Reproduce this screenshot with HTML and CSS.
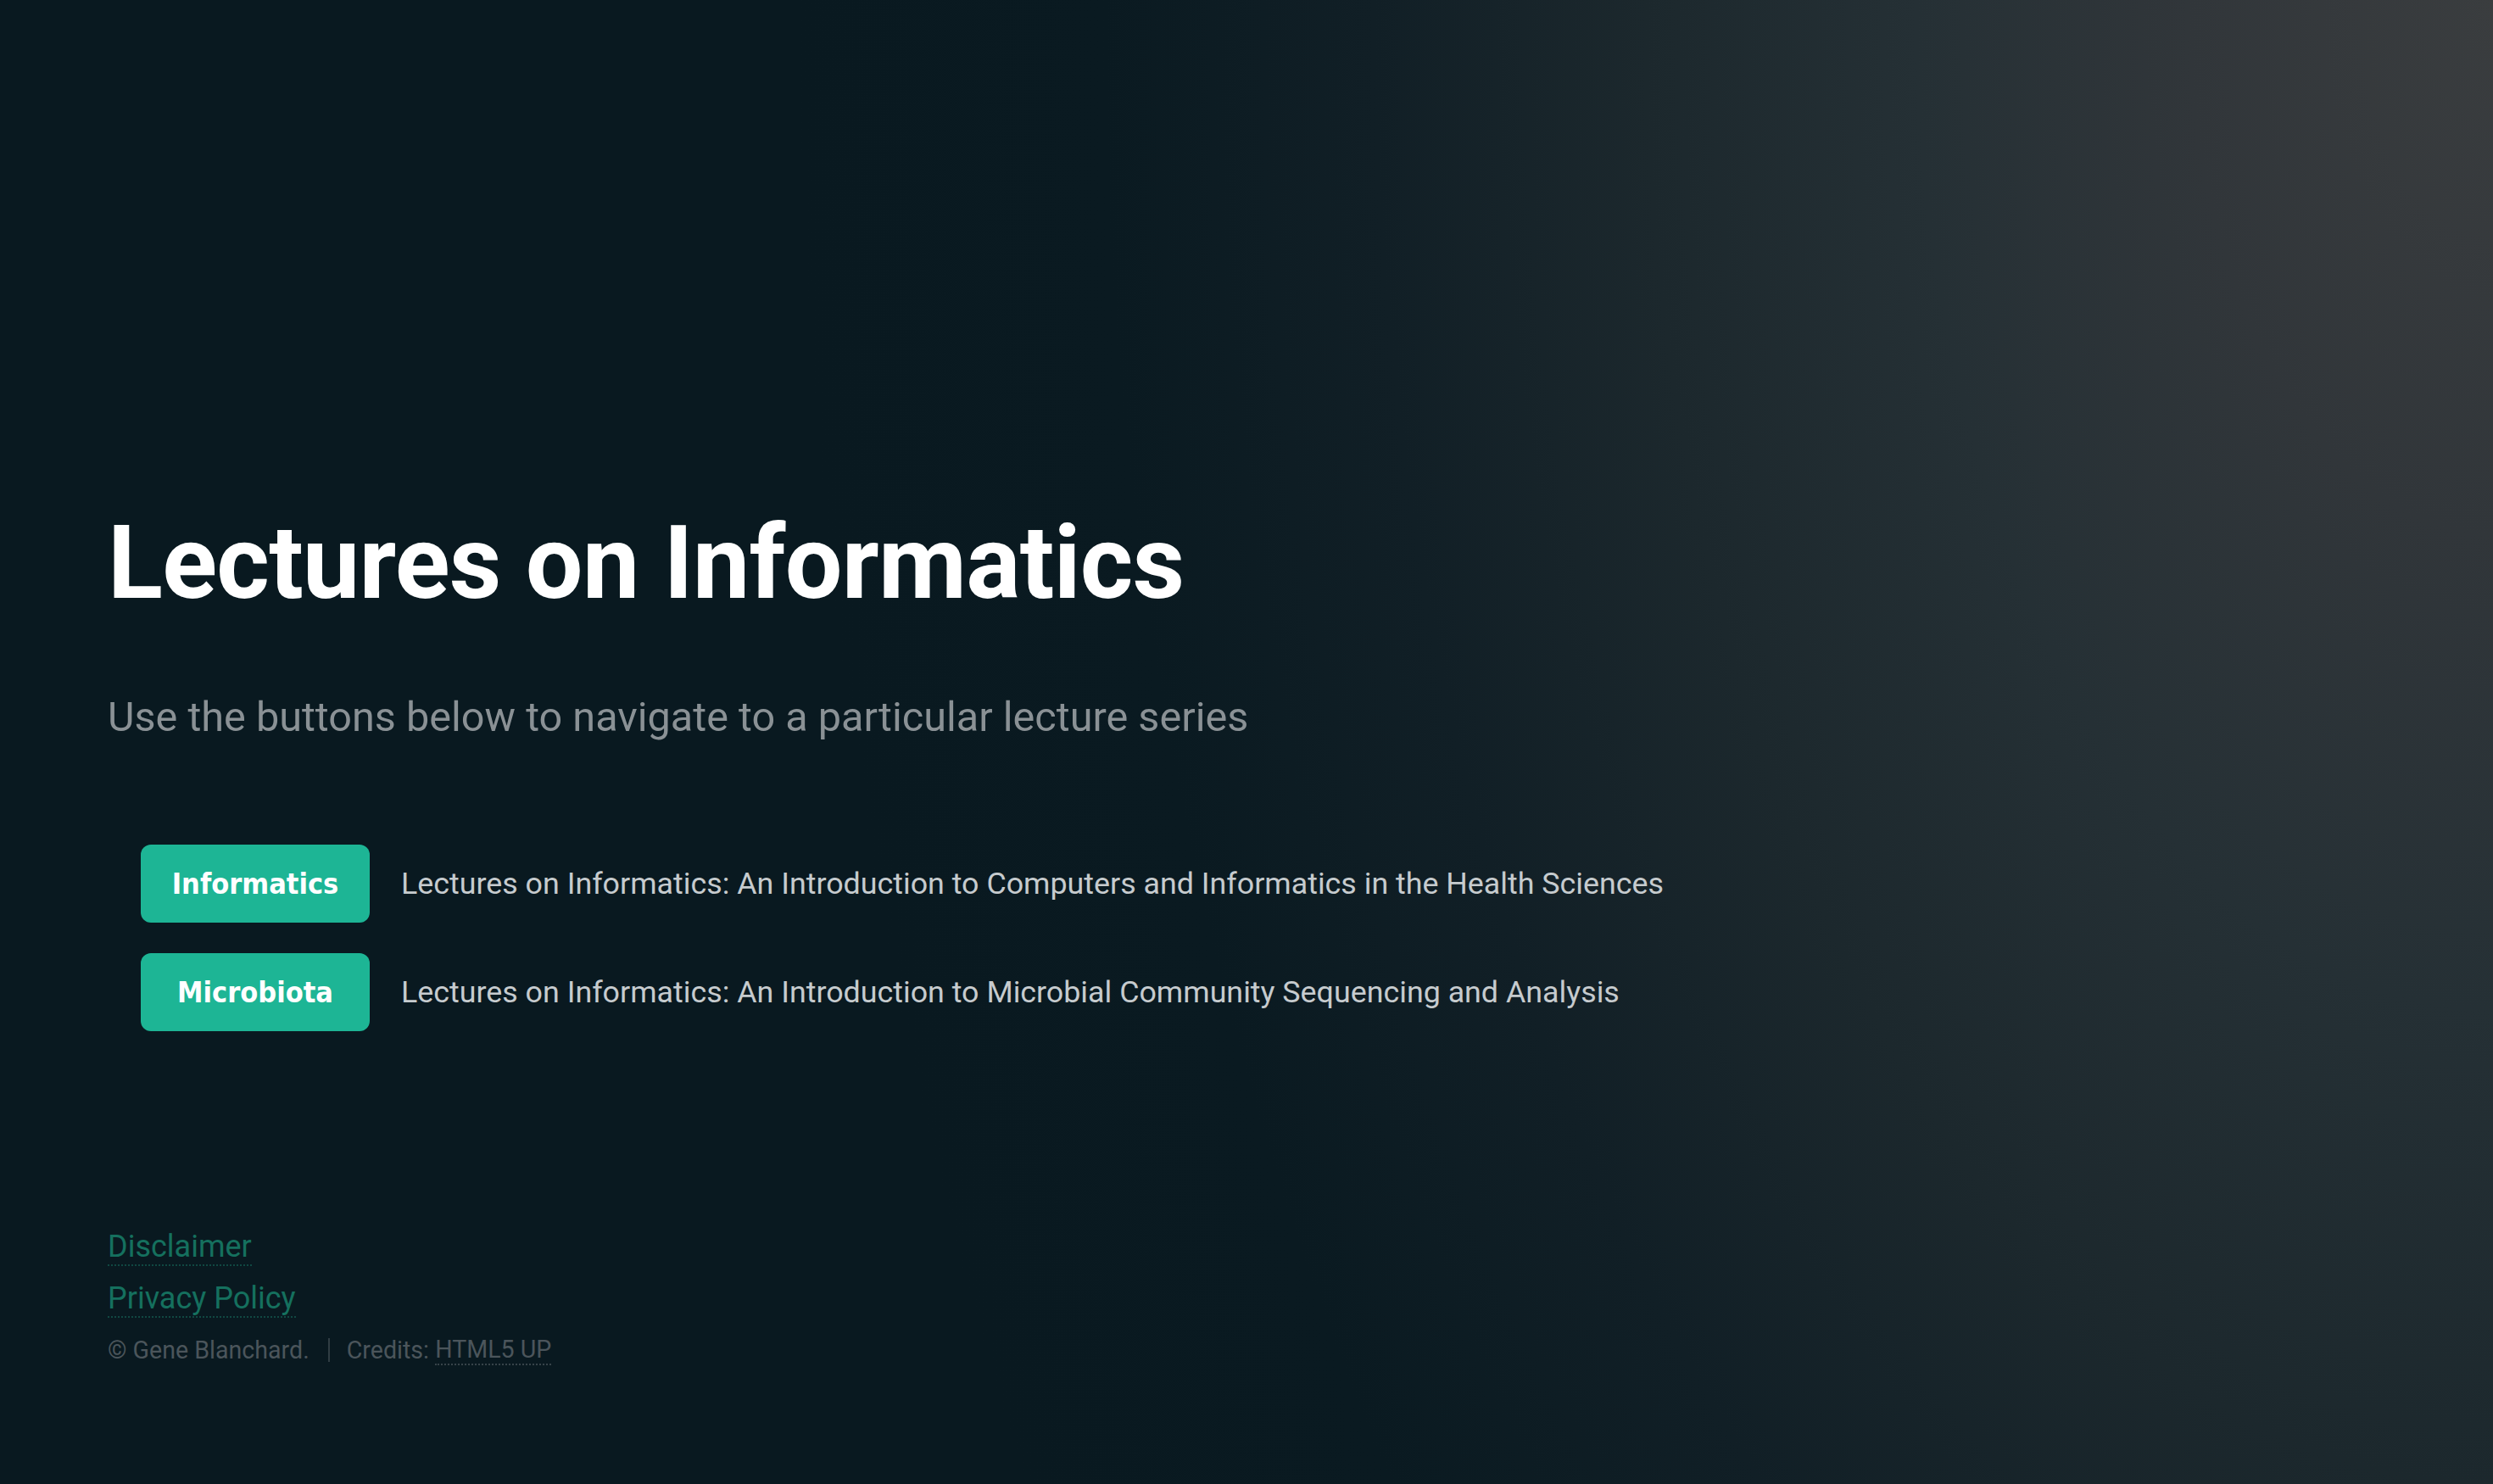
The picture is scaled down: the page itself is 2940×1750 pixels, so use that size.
FILE: index.html
```html
<!DOCTYPE html>
<html lang="en">
<head>
<meta charset="utf-8">
<title>Lectures on Informatics</title>
<link rel="stylesheet" href="styles.css">
</head>
<body>
<div class="page">
  <header class="intro">
    <h1 class="title">Lectures on Informatics</h1>
    <p class="lead">Use the buttons below to navigate to a particular lecture series</p>
    <div class="series">
      <div class="series-row">
        <a class="btn" href="#">Informatics</a>
        <span class="series-desc">Lectures on Informatics: An Introduction to Computers and Informatics in the Health Sciences</span>
      </div>
      <div class="series-row">
        <a class="btn" href="#">Microbiota</a>
        <span class="series-desc">Lectures on Informatics: An Introduction to Microbial Community Sequencing and Analysis</span>
      </div>
    </div>
  </header>
  <footer class="footer">
    <div class="footer-link"><a href="#">Disclaimer</a></div>
    <div class="footer-link"><a href="#">Privacy Policy</a></div>
    <ul class="copyright">
      <li>&copy; Gene Blanchard.</li>
      <li>Credits: <a href="#">HTML5 UP</a></li>
    </ul>
  </footer>
</div>
</body>
</html>
```

FILE: styles.css
```css
html, body {
  margin: 0;
  padding: 0;
}

body {
  background-color: #091920;
  background-image: radial-gradient(ellipse 2000px 3500px at 100% 0%, #3a3d3f 0%, #31363a 18%, #253035 34%, #1c282d 50%, #111f26 66%, #0a1a21 82%, #091920 100%);
  font-family: Roboto, "Noto Sans", sans-serif;
  color: #c6cbce;
  min-height: 1750px;
}

.page {
  box-sizing: border-box;
  min-height: 1750px;
  padding: 592px 127px 127px;
  display: flex;
  flex-direction: column;
}

.title {
  margin: 0;
  font-family: Roboto, sans-serif;
  font-weight: 700;
  font-size: 120px;
  line-height: 144px;
  letter-spacing: -0.7px;
  color: #ffffff;
}

.lead {
  margin: 74px 0 0;
  font-size: 48.6px;
  line-height: 72px;
  font-weight: 400;
  color: #8a9195;
}

.series {
  margin: 114px 0 0 39px;
  display: flex;
  flex-direction: column;
  gap: 36px;
}

.series-row {
  display: flex;
  align-items: center;
  gap: 37px;
}

.btn {
  flex: none;
  width: 270px;
  height: 92px;
  display: flex;
  align-items: center;
  justify-content: center;
  background: #1db595;
  border-radius: 12px;
  color: #ffffff;
  text-decoration: none;
  font-family: "DejaVu Sans Condensed", "DejaVu Sans", Verdana, sans-serif;
  font-stretch: condensed;
  font-weight: 700;
  font-size: 34px;
}

.series-desc {
  font-size: 35.8px;
  color: #c6cbce;
}

.footer {
  margin-top: auto;
}

.footer-link {
  font-size: 36px;
  line-height: 61px;
}

.footer-link a {
  color: #15705e;
  text-decoration: none;
  border-bottom: 2px dotted rgba(21, 112, 94, 0.55);
}

.copyright {
  list-style: none;
  margin: 0;
  padding: 0;
  display: flex;
  font-size: 28.6px;
  line-height: 61px;
  color: #4b555b;
}

.copyright li {
  display: flex;
  align-items: center;
}

.copyright li + li {
  margin-left: 22px;
  padding-left: 22px;
  position: relative;
}

.copyright li + li::before {
  content: "";
  position: absolute;
  left: 0;
  top: 16px;
  height: 28px;
  border-left: 2px solid rgba(75, 85, 91, 0.6);
}

.copyright a {
  color: #4b555b;
  text-decoration: none;
  border-bottom: 2px dotted rgba(75, 85, 91, 0.7);
  line-height: 1.15;
  margin-left: 0.25em;
}
```
